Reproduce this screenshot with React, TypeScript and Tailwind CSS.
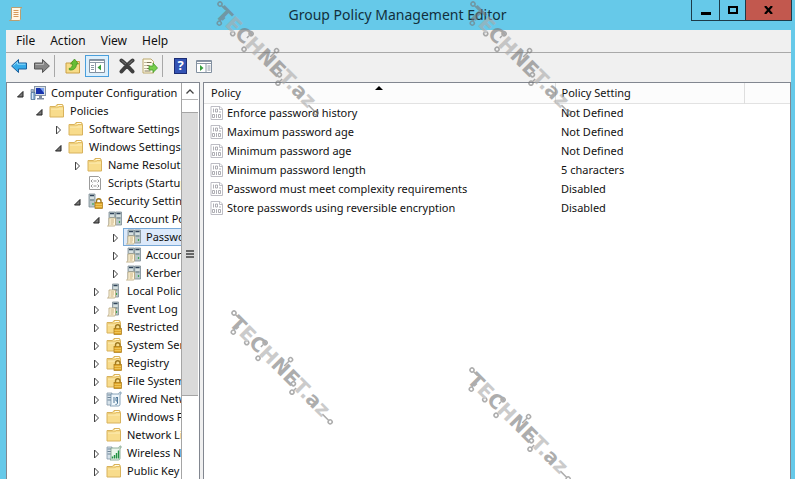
import clsx from 'clsx'

type IconName = 'computer' | 'folder' | 'script' | 'security' | 'servers' | 'policy' | 'locked' | 'wired' | 'wireless'

type TreeRow = {
  label: string
  level: number
  icon: IconName
  state?: 'open' | 'closed'
  selected?: boolean
}

const TREE: TreeRow[] = [
  { label: 'Computer Configuration', level: 0, icon: 'computer', state: 'open' },
  { label: 'Policies', level: 1, icon: 'folder', state: 'open' },
  { label: 'Software Settings', level: 2, icon: 'folder', state: 'closed' },
  { label: 'Windows Settings', level: 2, icon: 'folder', state: 'open' },
  { label: 'Name Resolution Policy', level: 3, icon: 'folder', state: 'closed' },
  { label: 'Scripts (Startup/Shutdown)', level: 3, icon: 'script' },
  { label: 'Security Settings', level: 3, icon: 'security', state: 'open' },
  { label: 'Account Policies', level: 4, icon: 'servers', state: 'open' },
  { label: 'Password Policy', level: 5, icon: 'servers', state: 'closed', selected: true },
  { label: 'Account Lockout Policy', level: 5, icon: 'servers', state: 'closed' },
  { label: 'Kerberos Policy', level: 5, icon: 'servers', state: 'closed' },
  { label: 'Local Policies', level: 4, icon: 'policy', state: 'closed' },
  { label: 'Event Log', level: 4, icon: 'policy', state: 'closed' },
  { label: 'Restricted Groups', level: 4, icon: 'locked', state: 'closed' },
  { label: 'System Services', level: 4, icon: 'locked', state: 'closed' },
  { label: 'Registry', level: 4, icon: 'locked', state: 'closed' },
  { label: 'File System', level: 4, icon: 'locked', state: 'closed' },
  { label: 'Wired Network Policies', level: 4, icon: 'wired', state: 'closed' },
  { label: 'Windows Firewall', level: 4, icon: 'folder', state: 'closed' },
  { label: 'Network List Manager', level: 4, icon: 'folder' },
  { label: 'Wireless Network Policies', level: 4, icon: 'wireless', state: 'closed' },
  { label: 'Public Key Policies', level: 4, icon: 'folder', state: 'closed' },
]

const INDENT = ['pl-[9px]', 'pl-[28px]', 'pl-[47px]', 'pl-[66px]', 'pl-[85px]', 'pl-[104px]']

const POLICIES = [
  ['Enforce password history', 'Not Defined'],
  ['Maximum password age', 'Not Defined'],
  ['Minimum password age', 'Not Defined'],
  ['Minimum password length', '5 characters'],
  ['Password must meet complexity requirements', 'Disabled'],
  ['Store passwords using reversible encryption', 'Disabled'],
]

function Folder() {
  return (
    <>
      <path d="M1 14V3.500h5.500L8 1.500h5.500l1 2V14z" fill="#f8dc8c" stroke="#d8b25c" />
      <path d="M2 5h6.500L10 3.500h4" fill="none" stroke="#e3bd64" />
      <path d="M9 2.500h4" stroke="#fffbe8" />
      <path d="M2 6h12" stroke="#fdeeb8" />
    </>
  )
}

function Lock() {
  return (
    <>
      <path d="M9.500 10V8a2 2 0 0 1 4.500 0v2" fill="none" stroke="#a07a20" strokeWidth="1.4" />
      <rect x="8" y="9.500" width="7.500" height="6" fill="#dfa52a" stroke="#a97814" strokeWidth=".7" />
      <path d="M8.500 11.500h6.500M8.500 13.500h6.500" stroke="#f6d36a" strokeWidth=".7" />
    </>
  )
}

function Tower({ x, y }: { x: number; y: number }) {
  return (
    <>
      <path d={`M${x} ${y}h6v${14 - y}h-6z`} fill="#b9c7c9" stroke="#7c8c94" strokeWidth=".8" />
      <path d={`M${x + 1} ${y + 1.5}h4`} stroke="#31435a" strokeWidth="1.2" />
      <path d={`M${x + 1} ${y + 4}h4`} stroke="#f4f8f8" />
      <path d={`M${x + 1} ${y + 6}h4`} stroke="#60747f" />
      <path d={`M${x + 4} ${y + 9}v2`} stroke="#3fa655" strokeWidth="1.2" />
    </>
  )
}

function Scroll() {
  return (
    <>
      <path d="M3 7h6.500v6c0 1.500-.5 2-1.500 2H1.500c1-.5 1.500-1 1.500-2z" fill="#fff8e2" stroke="#b5a277" strokeWidth=".8" />
      <path d="M4.500 9h3.500M4.500 11h3.500M4.500 13h3" stroke="#b9975d" strokeWidth=".8" />
    </>
  )
}

function TreeIcon({ name }: { name: IconName }) {
  return (
    <svg viewBox="0 0 16 16" className="size-4 shrink-0" aria-hidden="true">
      {name === 'folder' && <Folder />}
      {name === 'locked' && (
        <>
          <Folder />
          <Lock />
        </>
      )}
      {name === 'computer' && (
        <>
          <rect x="4.500" y="1.500" width="11" height="9" fill="#dbe3ea" stroke="#8795a5" />
          <path d="M6 3h8v6H6z" fill="#1733ad" />
          <path d="M10 3h4v5z" fill="#7ba0f0" />
          <path d="M9 11h3v2h2v1.500H7V13h2z" fill="#7d8ca1" />
          <path d="M1 4.500h2.500V7H1z" fill="#a9bccf" stroke="#73879b" strokeWidth=".7" />
          <path d="M1 7.500h4v7H1z" fill="#8fb2d6" stroke="#43678d" strokeWidth=".7" />
          <path d="M2.500 8v6" stroke="#d9e8f5" />
        </>
      )}
      {name === 'script' && (
        <>
          <path d="M2.500 1.500h9l2 2v11h-11z" fill="#fff" stroke="#9b9b9b" />
          <path d="M5.500 4.500 4 6l1.500 1.500M10.500 4.500 12 6l-1.500 1.500M6.500 6h3M5.500 9.500 4 11l1.500 1.500M10.500 9.500 12 11l-1.500 1.500M6.500 11h3" fill="none" stroke="#777" strokeWidth=".8" />
        </>
      )}
      {name === 'security' && (
        <>
          <Tower x={2} y={1} />
          <Lock />
        </>
      )}
      {name === 'servers' && (
        <>
          <Tower x={3} y={1} />
          <Tower x={9.5} y={1} />
          <Scroll />
        </>
      )}
      {name === 'policy' && (
        <>
          <Tower x={6.5} y={1} />
          <Scroll />
        </>
      )}
      {name === 'wired' && (
        <>
          <path d="M1 2h5v12H1z" fill="#d6e2ea" stroke="#8497a8" strokeWidth=".8" />
          <path d="M1.500 4h4M1.500 6.500h4M1.500 9h4" stroke="#6e8599" />
          <path d="M5 3h8c0-1.500.5-2 2-2v2h-1v10c0 1.500-.5 2-2 2H4c1-1 1-1 1-2z" fill="#eef6fb" stroke="#6f8faa" strokeWidth=".8" />
          <path d="M8 6v6M11.500 6v6c0 1-1 1.500-2 1.500M11.500 6.500H10V10h1.500" fill="none" stroke="#4f7798" />
        </>
      )}
      {name === 'wireless' && (
        <>
          <path d="M1 2h5v12H1z" fill="#d6e2ea" stroke="#8497a8" strokeWidth=".8" />
          <path d="M1.500 4h4M1.500 6.500h4M1.500 9h4" stroke="#6e8599" />
          <path d="M5 3h8c0-1.500.5-2 2-2v2h-1v10c0 1.500-.5 2-2 2H4c1-1 1-1 1-2z" fill="#e9f6ec" stroke="#78a085" strokeWidth=".8" />
          <path d="M6.500 13.500v-2M8.500 13.500V10M10.500 13.500V8M12.500 13.500V5.500" stroke="#219243" strokeWidth="1.400" />
        </>
      )}
    </svg>
  )
}

function Expander({ state, label }: { state?: 'open' | 'closed'; label: string }) {
  if (!state) return <span className="w-[9px] shrink-0" />
  return (
    <button
      type="button"
      aria-label={`${state === 'open' ? 'Collapse' : 'Expand'} ${label}`}
      className="mt-0.5 w-[9px] shrink-0"
    >
      <svg viewBox="0 0 9 10" className="h-[10px] w-[9px]">
        {state === 'open' ? (
          <path d="M7 2.500v5.500H1.500z" fill="#777" stroke="#222" />
        ) : (
          <path d="M2.500 1v8l4-4z" fill="#fff" stroke="#444" />
        )}
      </svg>
    </button>
  )
}

function ToolSeparator() {
  return <span className="h-[22px] w-px bg-[#a8a8a8]" />
}

function Toolbar() {
  return (
    <div role="toolbar" className="flex h-[29px] items-center pb-1 pl-[5px]">
      <button type="button" aria-label="Back" className="mr-[7px]">
        <svg viewBox="0 0 16 16" className="size-4">
          <path d="M.6 8 7.500 1.500v3.500h8v6h-8v3.500z" fill="#35aae8" stroke="#1b5f9c" />
          <path d="M2.500 7.500 6.500 4v2.200H14.500" fill="none" stroke="#93dbfb" />
        </svg>
      </button>
      <button type="button" aria-label="Forward" className="mr-1">
        <svg viewBox="0 0 16 16" className="size-4">
          <path d="M15.400 8 8.500 1.500v3.500h-8v6h8v3.500z" fill="#858585" stroke="#555" />
          <path d="M1.500 6.500h8V4" fill="none" stroke="#b5b5b5" />
        </svg>
      </button>
      <ToolSeparator />
      <button type="button" aria-label="Up one level" className="mr-1 ml-[10px]">
        <svg viewBox="0 0 16 16" className="size-4">
          <path d="M1 15V5h5l1-1.500h7.500V15z" fill="#f7dc88" stroke="#cba046" />
          <path d="M4 10.500c2.500-.5 3.500-2 3.500-4.500H5.500L9.500 1l4 5h-2c0 4-2.500 6.500-7 6z" fill="#67bd35" stroke="#3c8c1a" strokeWidth=".7" />
        </svg>
      </button>
      <button
        type="button"
        aria-label="Show or hide console tree"
        aria-pressed="true"
        className="flex h-[22px] w-6 items-center justify-center border border-[#4a9fdc] bg-[#dceffc]"
      >
        <svg viewBox="0 0 16 16" className="size-4">
          <path d="M.5 1.500h15v13H.5z" fill="#fff" stroke="#8290a0" />
          <path d="M1 2.500h14M1 4.500h14" stroke="#8c98a6" />
          <path d="M6.500 5v9.500" stroke="#8c98a6" />
          <path d="M2 7.500h3M2 9.500h3M2 11.500h3" stroke="#8c98a6" />
          <path d="M12 6.500v6l-3.500-3z" fill="#36a03b" />
        </svg>
      </button>
      <button type="button" aria-label="Delete" className="ml-[10px]">
        <svg viewBox="0 0 16 16" className="size-4">
          <path d="M2.500 2.500c4 3 7 6.500 11 11M13.500 2.500c-4 3-7 6.500-11 11" stroke="#404040" strokeWidth="4" strokeLinecap="round" />
          <path d="M2.500 2.500 7 6M13.500 2.500 9.500 6" stroke="#777" />
        </svg>
      </button>
      <button type="button" aria-label="Export list" className="mr-1 ml-[7px]">
        <svg viewBox="0 0 16 16" className="size-4">
          <path d="M1 1h8l2.500 2.500V15H1z" fill="#fffbea" stroke="#bba86d" />
          <path d="M2.500 4.500h1M2.500 7.500h1M2.500 10.500h1M4.500 4.500h5M4.500 7.500h3M4.500 10.500h3M2.500 13h6" stroke="#807558" />
          <path d="M7 8h4V5l4.500 5-4.500 4.500V12H7z" fill="#77cf4b" stroke="#42992a" strokeWidth=".8" />
        </svg>
      </button>
      <ToolSeparator />
      <button
        type="button"
        aria-label="Help"
        className="ml-[11px] flex h-4 w-[13px] items-center justify-center border border-[#1c2c74] bg-[#3353b4] text-[13px] leading-none font-bold text-white"
      >
        ?
      </button>
      <button type="button" aria-label="Show or hide action pane" className="ml-[9px]">
        <svg viewBox="0 0 16 16" className="size-4">
          <path d="M.5 2.500h15v12H.5z" fill="#fff" stroke="#8290a0" />
          <path d="M1 3.500h14M1 5.500h14" stroke="#8c98a6" />
          <path d="M10 6v8.500" stroke="#8c98a6" />
          <path d="M11.500 8h3M11.500 10h3M11.500 12h3" stroke="#8c98a6" />
          <path d="M4 7v6l3.500-3z" fill="#36a03b" />
        </svg>
      </button>
    </div>
  )
}

function TitleBar() {
  return (
    <header className="flex h-[30px] shrink-0 items-start pr-[3px] pl-2">
      <svg viewBox="0 0 16 16" className="mt-[6px] size-4 shrink-0" aria-hidden="true">
        <path d="M3.500 1.500H14c-1 .5-1.500 1-1.500 2V13c0 1-.7 1.500-1.500 1.500H1.500c1.300-.3 2-1 2-2z" fill="#fff8e6" stroke="#b99f72" />
        <path d="M5.500 4.500h5M5.500 6.500h5M5.500 8.500h5M5.500 10.500h5" stroke="#d49a5c" />
      </svg>
      <h1 className="flex-1 pl-20 text-center text-[14px] leading-[29px] text-[#12303c]">
        Group Policy Management Editor
      </h1>
      <div className="flex h-[21px] border border-t-0 border-[#1d3a48]">
        <button type="button" aria-label="Minimize" className="flex w-[27px] items-center justify-center">
          <span className="mt-[6px] h-[3px] w-[10px] bg-black" />
        </button>
        <button type="button" aria-label="Maximize" className="flex w-[27px] items-center justify-center border-x border-[#1d3a48]">
          <span className="h-2 w-[10px] border-2 border-black" />
        </button>
        <button type="button" aria-label="Close" className="flex w-[45px] items-center justify-center bg-[#c2584e]">
          <svg viewBox="0 0 9 8" className="h-2 w-[9px]">
            <path d="M1 0l7 8M8 0 1 8" stroke="#000" strokeWidth="2.200" />
          </svg>
        </button>
      </div>
    </header>
  )
}

function ConsoleTree() {
  return (
    <nav className="flex w-[194px] shrink-0 border border-b-0 border-[#828790] bg-white pr-px">
      <ul className="min-w-0 flex-1 overflow-hidden pt-px">
        {TREE.map((row) => (
          <li key={row.label} className={clsx('flex h-[18px] items-center whitespace-nowrap', INDENT[row.level])}>
            <Expander state={row.state} label={row.label} />
            <span
              className={clsx(
                'ml-[3px] flex h-[18px] flex-1 items-center gap-[5px] border pl-px',
                row.selected ? 'border-[#7aaad8] bg-[#dce9fa]' : 'border-transparent',
              )}
            >
              <TreeIcon name={row.icon} />
              {row.label}
            </span>
          </li>
        ))}
      </ul>
      <div className="flex w-[17px] shrink-0 flex-col border-l border-[#a5a5a5]">
        <button type="button" aria-label="Scroll up" className="flex h-[17px] items-center justify-center border-b border-[#b5b5b5]">
          <svg viewBox="0 0 8 5" className="h-[5px] w-2">
            <path d="M.5 4.500 4 1l3.500 3.500" fill="none" stroke="#444" strokeWidth="1.300" />
          </svg>
        </button>
        <div className="mt-3 flex h-[284px] flex-col items-center justify-center gap-px border-y border-[#a5a5a5] bg-[#dadada]">
          <span className="h-[2px] w-2 bg-[#666]" />
          <span className="h-[2px] w-2 bg-[#666]" />
          <span className="h-[2px] w-2 bg-[#666]" />
        </div>
      </div>
    </nav>
  )
}

function PolicyIcon() {
  return (
    <svg viewBox="0 0 14 14" className="h-[14px] w-[14px] shrink-0" aria-hidden="true">
      <path d="M1 .5h9L12.500 3v10.500H1z" fill="#fff" stroke="#bdbdc4" />
      <path d="M9.500.5v3h3" fill="none" stroke="#bdbdc4" />
      <path d="M3.500 2.500v4M5.500 3h2v3h-2zM2.500 8.500h2v3h-2zM6.500 8v4M8.500 8.500h2v3h-2zM10 5v2" fill="none" stroke="#9a9aa2" strokeWidth=".8" />
    </svg>
  )
}

function PolicyList() {
  return (
    <main className="min-w-0 flex-1 border border-b-0 border-[#828790] bg-white">
      <table className="w-full table-fixed border-collapse text-left whitespace-nowrap">
        <colgroup>
          <col className="w-[351px]" />
          <col className="w-[189px]" />
          <col />
        </colgroup>
        <thead>
          <tr className="h-5 border-b border-[#e2e2e2] bg-[#fcfcfc]">
            <th aria-sort="ascending" className="relative border-r border-[#dedede] p-0 pl-[7px] font-normal">
              Policy
              <svg viewBox="0 0 8 4" className="absolute top-[3px] right-[172px] h-1 w-2" aria-hidden="true">
                <path d="M4 0l4 4H0z" />
              </svg>
            </th>
            <th className="border-r border-[#dedede] p-0 pl-[6px] font-normal">Policy Setting</th>
            <td className="p-0" />
          </tr>
        </thead>
        <tbody>
          {POLICIES.map(([name, setting]) => (
            <tr key={name} className="h-[19px]">
              <td className="p-0 pl-[6px]">
                <div className="flex items-center gap-[3px]">
                  <PolicyIcon />
                  {name}
                </div>
              </td>
              <td className="p-0 pl-[6px]">{setting}</td>
              <td className="p-0" />
            </tr>
          ))}
        </tbody>
      </table>
    </main>
  )
}

// Circuit-style mark, laid diagonally over the window
function Watermark({ className }: { className: string }) {
  return (
    <svg
      viewBox="0 0 116 124"
      className={clsx('pointer-events-none absolute h-[124px] w-[116px] opacity-60', className)}
      aria-hidden="true"
    >
      <g transform="translate(5 5) rotate(45)">
        <g fill="none" stroke="#777" strokeWidth="1.500">
          <path d="M2 0h6M13 10V6M43 2v3M49 12V8M73-5v7M97 13V9M134 9h9" />
          <circle cx="0" cy="0" r="2" />
          <circle cx="13" cy="14" r="2" />
          <circle cx="30" cy="12" r="2" />
          <circle cx="43" cy="-1" r="2" />
          <circle cx="49" cy="15" r="2" />
          <circle cx="73" cy="-7" r="2" />
          <circle cx="92" cy="8" r="2" />
          <circle cx="97" cy="15" r="2" />
          <circle cx="145" cy="9" r="2" />
        </g>
        <text x="4" y="12" fontSize="20" fontWeight="700" fontFamily="DejaVu Sans, sans-serif" fill="#777">
          T<tspan fill="#aaa">E</tspan>C<tspan fill="#aaa">H</tspan>NE<tspan fill="#aaa">T.</tspan>a<tspan fill="#aaa">z</tspan>
        </text>
      </g>
    </svg>
  )
}

export default function App() {
  return (
    <div className="relative flex h-screen flex-col overflow-hidden bg-[#66c9e9] font-['Noto_Sans','Open_Sans',sans-serif] text-[11px] leading-[18px] text-[#111]">
      <TitleBar />
      <div className="mr-1 ml-[6px] flex min-h-0 flex-1 flex-col bg-[#f0f0f0]">
        <div role="menubar" className="flex h-[23px] shrink-0 items-center gap-[15px] border-b border-[#a9a9a9] pl-[10px] text-[12px]">
          <button type="button" role="menuitem">File</button>
          <button type="button" role="menuitem">Action</button>
          <button type="button" role="menuitem">View</button>
          <button type="button" role="menuitem">Help</button>
        </div>
        <Toolbar />
        <div className="flex min-h-0 flex-1 gap-[3px]">
          <ConsoleTree />
          <PolicyList />
        </div>
      </div>
      <Watermark className="top-[-1px] left-[215px]" />
      <Watermark className="top-[-1px] left-[468px]" />
      <Watermark className="top-[308px] left-[229px]" />
      <Watermark className="top-[365px] left-[467px]" />
    </div>
  )
}
